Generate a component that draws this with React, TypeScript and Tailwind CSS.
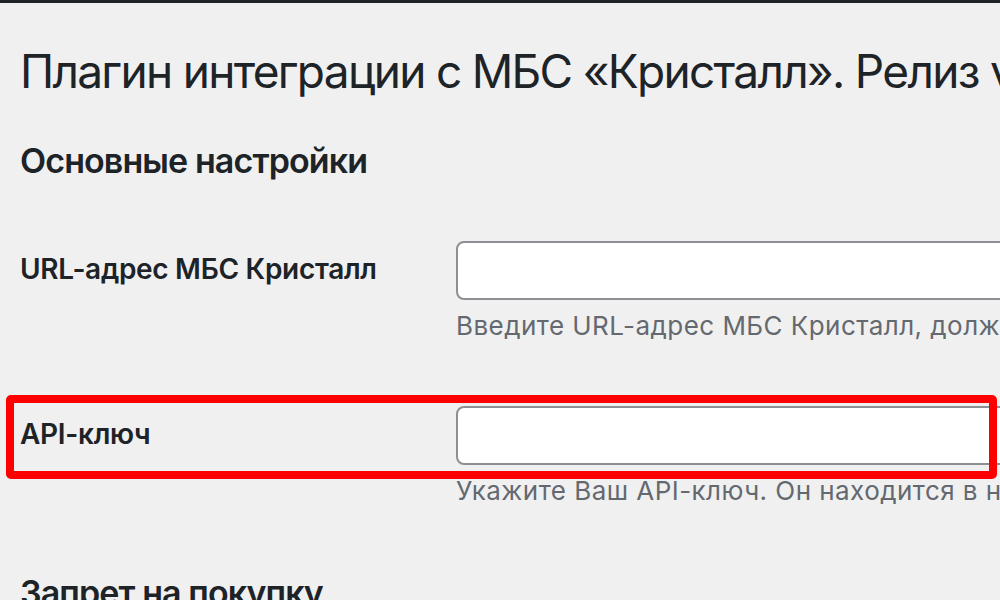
import React from 'react';

const fontStack = { fontFamily: 'Inter, "Noto Sans", sans-serif' };

const SettingRow = ({ label, hint }: { label: string; hint: string }) => (
  <div className="flex h-[165px]">
    <div className="w-[436px] shrink-0 pt-[10px] text-[28px] leading-[36px] font-semibold tracking-[-0.3px] text-[#1d2327]">
      {label}
    </div>
    <div className="flex-1 min-w-0">
      <input
        type="text"
        className="block w-[620px] h-[59px] bg-white border-2 border-[#8c8f94] rounded-[8px] outline-none"
      />
      <p className="mt-[9px] text-[26px] leading-[34px] tracking-[0.45px] text-[#646970] whitespace-nowrap">
        {hint}
      </p>
    </div>
  </div>
);

const App = () => {
  return (
    <div className="relative w-[1000px] h-[600px] overflow-hidden bg-[#f0f0f1]" style={fontStack}>
      <div className="h-[3px] bg-[#1d2327]" />
      <div className="pl-[20px]">
        <h1 className="mt-[38px] text-[46px] leading-[60px] font-normal tracking-[-1.7px] text-[#1d2327] whitespace-nowrap">
          Плагин интеграции с МБС «Кристалл». Релиз v1.0
        </h1>
        <h2 className="mt-[38px] text-[34px] leading-[44px] font-semibold tracking-[-0.9px] text-[#1d2327]">
          Основные настройки
        </h2>
        <div className="mt-[58px]">
          <SettingRow
            label="URL-адрес МБС Кристалл"
            hint="Введите URL-адрес МБС Кристалл, должен начинаться с https://"
          />
          <SettingRow
            label="API-ключ"
            hint="Укажите Ваш API-ключ. Он находится в настройках МБС Кристалл"
          />
        </div>
        <h2 className="text-[34px] leading-[44px] font-semibold tracking-[-0.9px] text-[#1d2327] whitespace-nowrap">
          Запрет на покупку
        </h2>
      </div>

      {/* highlight annotation */}
      <div className="absolute left-[6px] top-[395px] w-[991px] h-[84px] border-[8px] border-[#ff0000] rounded-[5px] pointer-events-none" />
    </div>
  );
};

export default App;
